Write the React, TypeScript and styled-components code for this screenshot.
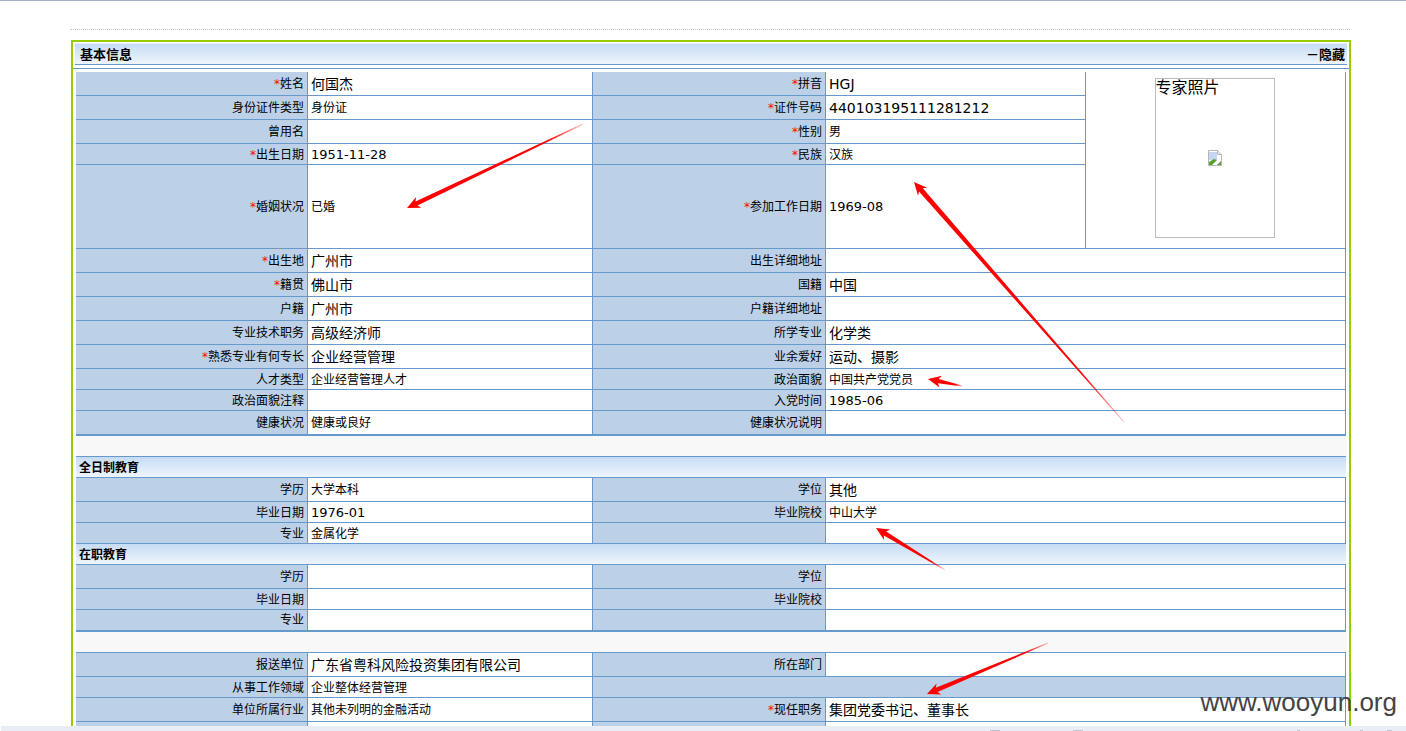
import React from "react";
import styled, { createGlobalStyle } from "styled-components";

const GlobalStyle = createGlobalStyle`
  html, body {
    margin: 0;
    padding: 0;
    background: #fff;
    overflow: hidden;
  }
`;

const LINE = "#6699cc";
const LABEL_BG = "#bcd0e8";
const HEADER_GRADIENT = "linear-gradient(to bottom, #c6dcf5, #eef5fc)";
const RED = "#ff0000";

const Page = styled.div`
  position: relative;
  width: 1406px;
  height: 731px;
  overflow: hidden;
  border-top: 1px solid #a9afc2;
  box-sizing: border-box;
  padding-top: 28px;
  font-family: "DejaVu Sans", "Noto Sans CJK SC", sans-serif;
  color: #000;
`;

const DottedRule = styled.div`
  margin: 0 56px 0 70px;
  height: 10px;
  border-top: 1px dotted #c8c8c8;
`;

const Panel = styled.div`
  box-sizing: border-box;
  width: 1280px;
  margin-left: 71px;
  border: 2px solid #99cc00;
  border-bottom: none;
`;

const TitleWrap = styled.div`
  padding: 1px 2px 3px;
  border-bottom: 1px solid ${LINE};
`;

const TitleBar = styled.div`
  box-sizing: border-box;
  height: 22px;
  display: flex;
  align-items: center;
  justify-content: space-between;
  padding: 1px 2px 0 5px;
  border-top: 1px solid #e4effb;
  border-bottom: 1px solid ${LINE};
  background: ${HEADER_GRADIENT};
  font-size: 13px;
  font-weight: 700;
  line-height: 16px;
`;

const Body = styled.div`
  padding: 3px 3px 0;
`;

const Sheet = styled.table`
  width: 1270px;
  table-layout: fixed;
  border-collapse: separate;
  border-spacing: 0;
`;

const Row = styled.tr<{ $h: number }>`
  height: ${(p) => p.$h}px;

  td {
    padding-top: ${(p) => (p.$h === 21 ? 2 : 0)}px;
  }
`;

const Label = styled.td<{ $end?: boolean }>`
  box-sizing: border-box;
  padding: 0 3px 0 0;
  background: ${LABEL_BG};
  border-right: 1px solid ${LINE};
  border-bottom: ${(p) => (p.$end ? 2 : 1)}px solid ${LINE};
  text-align: right;
  font-size: 12px;
  line-height: 16px;
  white-space: nowrap;
`;

const Value = styled.td<{ $size: number; $end?: boolean }>`
  box-sizing: border-box;
  padding: 0 0 0 3px;
  background: #fff;
  border-right: 1px solid ${LINE};
  border-bottom: ${(p) => (p.$end ? 2 : 1)}px solid ${LINE};
  font-size: ${(p) => p.$size}px;
  line-height: 16px;
  white-space: nowrap;
`;

const Req = styled.span`
  color: ${RED};
`;

const Gap = styled.td`
  padding: 0;
  background: #f8f8f8;
  border-bottom: 1px solid ${LINE};
`;

const SectionHead = styled.td`
  padding: 0 0 0 3px;
  background: ${HEADER_GRADIENT};
  border-bottom: 1px solid ${LINE};
  font-size: 12px;
  font-weight: 700;
  line-height: 16px;
`;

const PhotoCell = styled.td`
  box-sizing: border-box;
  padding: 0 2px 4px 0;
  border-right: 1px solid ${LINE};
  border-bottom: 1px solid ${LINE};
`;

const PhotoBox = styled.div`
  position: relative;
  box-sizing: border-box;
  width: 120px;
  height: 160px;
  margin: 0 auto;
  border: 1px solid #bdbdbd;
  font-size: 16px;
  line-height: 18px;
`;

const BrokenImage = styled.svg`
  position: absolute;
  left: 52px;
  top: 71px;
`;

const ArrowLayer = styled.svg`
  position: absolute;
  left: 0;
  top: 0;
  pointer-events: none;
`;

const Watermark = styled.div`
  position: absolute;
  right: 9px;
  top: 686px;
  font-family: "Liberation Sans", sans-serif;
  font-size: 26px;
  line-height: 30px;
  color: #444;
`;

const BottomStrip = styled.div`
  position: absolute;
  left: 1px;
  right: 0;
  bottom: 0;
  height: 5px;
  background: #e9eef5;
`;

const StripMark = styled.span<{ $x: number; $w: number }>`
  position: absolute;
  bottom: 0;
  left: ${(p) => p.$x}px;
  width: ${(p) => p.$w}px;
  height: 1px;
  background: #bcc3cf;
`;

type Pair = {
  h: number;
  a: string;
  aReq?: boolean;
  av?: string;
  as?: number;
  b: string;
  bReq?: boolean;
  bv?: string;
  bs?: number;
  end?: boolean;
};

const topRows: Pair[] = [
  { h: 24, a: "出生地", aReq: true, av: "广州市", as: 14, b: "出生详细地址" },
  { h: 24, a: "籍贯", aReq: true, av: "佛山市", as: 14, b: "国籍", bv: "中国", bs: 14 },
  { h: 24, a: "户籍", av: "广州市", as: 14, b: "户籍详细地址" },
  { h: 24, a: "专业技术职务", av: "高级经济师", as: 14, b: "所学专业", bv: "化学类", bs: 14 },
  { h: 24, a: "熟悉专业有何专长", aReq: true, av: "企业经营管理", as: 14, b: "业余爱好", bv: "运动、摄影", bs: 14 },
  { h: 21, a: "人才类型", av: "企业经营管理人才", b: "政治面貌", bv: "中国共产党党员" },
  { h: 21, a: "政治面貌注释", b: "入党时间", bv: "1985-06", bs: 13 },
  { h: 25, a: "健康状况", av: "健康或良好", b: "健康状况说明", end: true },
];

const fullTime: Pair[] = [
  { h: 24, a: "学历", av: "大学本科", b: "学位", bv: "其他", bs: 14 },
  { h: 21, a: "毕业日期", av: "1976-01", as: 13, b: "毕业院校", bv: "中山大学" },
  { h: 21, a: "专业", av: "金属化学", b: "" },
];

const partTime: Pair[] = [
  { h: 24, a: "学历", b: "学位" },
  { h: 21, a: "毕业日期", b: "毕业院校" },
  { h: 22, a: "专业", b: "", end: true },
];

const photoRows: Pair[] = [
  { h: 24, a: "身份证件类型", av: "身份证", b: "证件号码", bReq: true, bv: "440103195111281212", bs: 14 },
  { h: 24, a: "曾用名", b: "性别", bReq: true, bv: "男" },
  { h: 21, a: "出生日期", aReq: true, av: "1951-11-28", as: 13, b: "民族", bReq: true, bv: "汉族" },
  { h: 84, a: "婚姻状况", aReq: true, av: "已婚", b: "参加工作日期", bReq: true, bv: "1969-08", bs: 13 },
];

const Mark = ({ on }: { on?: boolean }) => (on ? <Req>*</Req> : null);

const LeftPair = ({ r }: { r: Pair }) => (
  <>
    <Label $end={r.end}>
      <Mark on={r.aReq} />
      {r.a}
    </Label>
    <Value $size={r.as ?? 12} $end={r.end}>
      {r.av}
    </Value>
  </>
);

const RightPair = ({ r, span }: { r: Pair; span?: number }) => (
  <>
    <Label $end={r.end}>
      <Mark on={r.bReq} />
      {r.b}
    </Label>
    <Value $size={r.bs ?? 12} $end={r.end} colSpan={span}>
      {r.bv}
    </Value>
  </>
);

const PairRows = ({ rows }: { rows: Pair[] }) => (
  <>
    {rows.map((r, i) => (
      <Row $h={r.h} key={i}>
        <LeftPair r={r} />
        <RightPair r={r} span={2} />
      </Row>
    ))}
  </>
);

// tail fades out, head is a small barbed tip, like a screenshot annotation tool
const arrows = [
  { id: "a1", tx: 583, ty: 123, hx: 407, hy: 207, w: 4.6 },
  { id: "a2", tx: 1124, ty: 421, hx: 914, hy: 181, w: 5 },
  { id: "a3", tx: 962, ty: 385, hx: 928, hy: 378, w: 4.2 },
  { id: "a4", tx: 945, ty: 569, hx: 876, hy: 527, w: 4.6 },
  { id: "a5", tx: 1048, ty: 642, hx: 927, hy: 693, w: 4.6 },
];

const arrowPoints = (a: (typeof arrows)[number]) => {
  const dx = a.tx - a.hx;
  const dy = a.ty - a.hy;
  const len = Math.hypot(dx, dy);
  const ux = dx / len;
  const uy = dy / len;
  const nx = -uy;
  const ny = ux;
  const at = (along: number, side: number) =>
    `${(a.hx + ux * along + nx * side).toFixed(1)},${(a.hy + uy * along + ny * side).toFixed(1)}`;
  return [
    at(0, 0),
    at(13, 6),
    at(10.5, a.w / 2),
    at(len, 0.4),
    at(len, -0.4),
    at(10.5, -a.w / 2),
    at(13, -6),
  ].join(" ");
};

const App: React.FC = () => (
  <Page>
    <GlobalStyle />
    <DottedRule />
    <Panel>
      <TitleWrap>
        <TitleBar>
          <span>基本信息</span>
          <span>－隐藏</span>
        </TitleBar>
      </TitleWrap>
      <Body>
        <Sheet>
          <colgroup>
            <col width={232} />
            <col width={285} />
            <col width={233} />
            <col width={260} />
            <col width={260} />
          </colgroup>
          <tbody>
            <Row $h={24}>
              <Label>
                <Req>*</Req>姓名
              </Label>
              <Value $size={14}>何国杰</Value>
              <Label>
                <Req>*</Req>拼音
              </Label>
              <Value $size={14}>HGJ</Value>
              <PhotoCell rowSpan={5}>
                <PhotoBox>
                  专家照片
                  <BrokenImage width="14" height="16" viewBox="0 0 14 16">
                    <path d="M0.5 0.5H9.5L13.5 4.5V15.5H0.5Z" fill="#fff" stroke="#b5b5b5" />
                    <path d="M9.5 0.5V4.5H13.5" fill="#e8e8e8" stroke="#b5b5b5" />
                    <rect x="1" y="2" width="8" height="8" fill="#c5d6f2" />
                    <path d="M1 15V12L6 9L9 10L4 15Z" fill="#5aa02c" />
                    <path d="M9 15L13 11V15Z" fill="#5aa02c" />
                  </BrokenImage>
                </PhotoBox>
              </PhotoCell>
            </Row>
            {photoRows.map((r, i) => (
              <Row $h={r.h} key={i}>
                <LeftPair r={r} />
                <RightPair r={r} />
              </Row>
            ))}
            <PairRows rows={topRows} />
            <Row $h={21}>
              <Gap colSpan={5} />
            </Row>
            <Row $h={21}>
              <SectionHead colSpan={5}>全日制教育</SectionHead>
            </Row>
            <PairRows rows={fullTime} />
            <Row $h={21}>
              <SectionHead colSpan={5}>在职教育</SectionHead>
            </Row>
            <PairRows rows={partTime} />
            <Row $h={21}>
              <Gap colSpan={5} />
            </Row>
            <Row $h={24}>
              <Label>报送单位</Label>
              <Value $size={14}>广东省粤科风险投资集团有限公司</Value>
              <Label>所在部门</Label>
              <Value $size={12} colSpan={2} />
            </Row>
            <Row $h={21}>
              <Label>从事工作领域</Label>
              <Value $size={12}>企业整体经营管理</Value>
              <Label colSpan={3} />
            </Row>
            <Row $h={24}>
              <Label>单位所属行业</Label>
              <Value $size={12}>其他未列明的金融活动</Value>
              <Label>
                <Req>*</Req>现任职务
              </Label>
              <Value $size={14} colSpan={2}>
                集团党委书记、董事长
              </Value>
            </Row>
            <Row $h={24}>
              <Label />
              <Value $size={12} />
              <Label />
              <Value $size={12} colSpan={2} />
            </Row>
          </tbody>
        </Sheet>
      </Body>
    </Panel>

    <ArrowLayer width="1406" height="731" viewBox="0 0 1406 731">
      <defs>
        {arrows.map((a) => (
          <linearGradient
            key={a.id}
            id={a.id}
            gradientUnits="userSpaceOnUse"
            x1={a.tx}
            y1={a.ty}
            x2={a.hx}
            y2={a.hy}
          >
            <stop offset="0" stopColor="#ff0000" stopOpacity="0.25" />
            <stop offset="0.2" stopColor="#ff0000" />
            <stop offset="1" stopColor="#ff0000" />
          </linearGradient>
        ))}
      </defs>
      {arrows.map((a) => (
        <polygon key={a.id} points={arrowPoints(a)} fill={`url(#${a.id})`} />
      ))}
    </ArrowLayer>

    <Watermark>www.wooyun.org</Watermark>
    <BottomStrip>
      <StripMark $x={989} $w={10} />
      <StripMark $x={1072} $w={10} />
      <StripMark $x={1296} $w={3} />
      <StripMark $x={1359} $w={3} />
      <StripMark $x={1386} $w={5} />
    </BottomStrip>
  </Page>
);

export default App;
